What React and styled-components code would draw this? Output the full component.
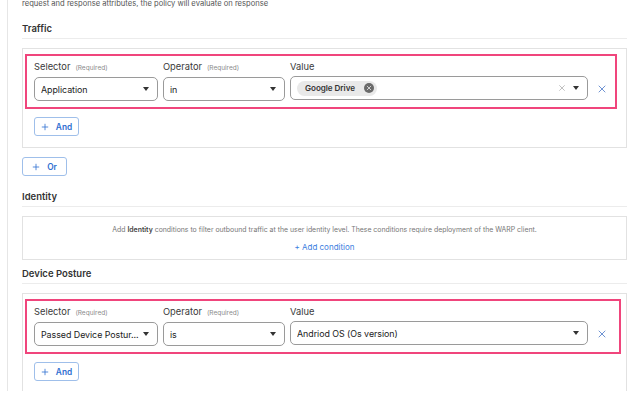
import React from "react";
import styled, { createGlobalStyle } from "styled-components";

const GlobalStyle = createGlobalStyle`
  html, body {
    margin: 0;
    background: #fff;
    font-family: Inter, "Noto Sans", sans-serif;
    color: #333;
    overflow: hidden;
  }
`;

const Page = styled.div`
  margin-left: 7px;
  border-left: 1px solid #e6e6e6;
  padding: 0 13px 0 14px;
  height: 393px;
  box-sizing: border-box;
`;

const Intro = styled.p`
  margin: -2px 0 0;
  font-size: 7.6px;
  line-height: 11px;
  color: #555;
`;

const Heading = styled.h3`
  margin: ${(p) => p.$top}px 0 0;
  padding-bottom: 2px;
  border-bottom: 1px solid #ececec;
  font-size: 9.5px;
  line-height: 14px;
  font-weight: 600;
  color: #333;
`;

const Box = styled.div`
  margin-top: 9px;
  border: 1px solid #e2e2e2;
  padding: 5px 9px 11px 2px;
`;

const Highlight = styled.div`
  border: 2px solid #f0457c;
  padding: 5px 0 6px 7px;
  margin-right: ${(p) => p.$right || 0}px;
  display: flex;
  align-items: flex-end;
`;

const Fields = styled.div`
  display: grid;
  grid-template-columns: 124px 122px 298px;
  column-gap: 5px;
`;

const Field = styled.div`
  display: flex;
  flex-direction: column;
`;

const Label = styled.div`
  font-size: 9.3px;
  line-height: 12px;
  color: #3a3a3a;
  margin-bottom: 3px;
  white-space: nowrap;

  small {
    font-size: 6.5px;
    color: #8a8a8a;
    margin-left: 5px;
  }
`;

const Select = styled.div`
  height: 24px;
  box-sizing: border-box;
  border: 1px solid #9a9a9a;
  border-radius: 5px;
  display: flex;
  align-items: center;
  padding: 0 8px 0 6px;
  font-size: 8.9px;
  color: #222;
  gap: 3px;
`;

const SelectText = styled.span`
  flex: 1;
  white-space: nowrap;
  overflow: hidden;
  letter-spacing: -0.05px;
`;

const Caret = styled.span`
  flex: none;
  width: 0;
  height: 0;
  border-left: 3px solid transparent;
  border-right: 3px solid transparent;
  border-top: 4px solid #333;
`;

const Chip = styled.span`
  display: inline-flex;
  align-items: center;
  gap: 9px;
  height: 15px;
  padding: 0 3px 0 8px;
  border-radius: 8px;
  background: #e9e9e9;
  font-size: 8.1px;
  font-weight: 600;
  color: #333;
`;

const ChipClose = styled.span`
  width: 10px;
  height: 10px;
  border-radius: 50%;
  background: #6a6a6a;
  display: inline-flex;
  align-items: center;
  justify-content: center;
`;

const Clear = styled.span`
  display: flex;
  margin-right: 4px;
`;

const Remove = styled.span`
  width: 28px;
  height: 24px;
  display: flex;
  align-items: center;
  justify-content: center;
`;

const AddButton = styled.button`
  margin: ${(p) => p.$top}px 0 0 ${(p) => p.$left}px;
  height: 19px;
  width: 45px;
  display: flex;
  align-items: center;
  justify-content: center;
  gap: 7px;
  background: #fff;
  border: 1px solid #9fbfea;
  border-radius: 3px;
  color: #2f6fd1;
  font-family: inherit;
  font-size: 8.3px;
  font-weight: 600;
  padding: 0;
`;

const Notice = styled.div`
  margin-top: 9px;
  border: 1px solid #e2e2e2;
  height: 44px;
  box-sizing: border-box;
  display: flex;
  flex-direction: column;
  align-items: center;
  padding-top: 8px;
  gap: 8px;
  font-size: 6.9px;
  color: #777;

  b {
    color: #444;
    font-weight: 600;
  }
`;

const Link = styled.span`
  color: #3b7ee0;
  font-size: 8px;
`;

const Cross = ({ size = 8, color = "#fff", width = 1.2 }) => (
  <svg width={size} height={size} viewBox="0 0 10 10">
    <path d="M2 2L8 8M8 2L2 8" stroke={color} strokeWidth={width} strokeLinecap="round" />
  </svg>
);

const Plus = () => (
  <svg width="8" height="8" viewBox="0 0 10 10">
    <path d="M5 1V9M1 5H9" stroke="#2f6fd1" strokeWidth="1" />
  </svg>
);

function Condition({ selector, operator, value, chip, right }) {
  return (
    <Highlight $right={right}>
      <Fields>
        <Field>
          <Label>
            Selector<small>(Required)</small>
          </Label>
          <Select>
            <SelectText>{selector}</SelectText>
            <Caret />
          </Select>
        </Field>
        <Field>
          <Label>
            Operator<small>(Required)</small>
          </Label>
          <Select>
            <SelectText>{operator}</SelectText>
            <Caret />
          </Select>
        </Field>
        <Field>
          <Label>Value</Label>
          <Select>
            <SelectText>
              {chip ? (
                <Chip>
                  {value}
                  <ChipClose>
                    <Cross size={6} width={1.4} color="#e6e6e6" />
                  </ChipClose>
                </Chip>
              ) : (
                value
              )}
            </SelectText>
            {chip && (
              <Clear>
                <Cross size={8} color="#b0b0b0" width={1} />
              </Clear>
            )}
            <Caret />
          </Select>
        </Field>
      </Fields>
      <Remove>
        <Cross size={10} color="#6f93d3" width={1} />
      </Remove>
    </Highlight>
  );
}

export default function App() {
  return (
    <>
      <GlobalStyle />
      <Page>
        <Intro>request and response attributes, the policy will evaluate on response</Intro>

        <Heading $top={13}>Traffic</Heading>
        <Box>
          <Condition selector="Application" operator="in" value="Google Drive" chip right={0} />
          <AddButton $top={8} $left={9}>
            <Plus /> And
          </AddButton>
        </Box>
        <AddButton $top={9} $left={0}>
          <Plus /> Or
        </AddButton>

        <Heading $top={14}>Identity</Heading>
        <Notice>
          <div>
            Add <b>Identity</b> conditions to filter outbound traffic at the user identity level. These
            conditions require deployment of the WARP client.
          </div>
          <Link>+ Add condition</Link>
        </Notice>

        <Heading $top={7}>Device Posture</Heading>
        <Box>
          <Condition
            selector="Passed Device Postur..."
            operator="is"
            value="Andriod OS (Os version)"
            right={-4}
          />
          <AddButton $top={8} $left={9}>
            <Plus /> And
          </AddButton>
        </Box>
      </Page>
    </>
  );
}
